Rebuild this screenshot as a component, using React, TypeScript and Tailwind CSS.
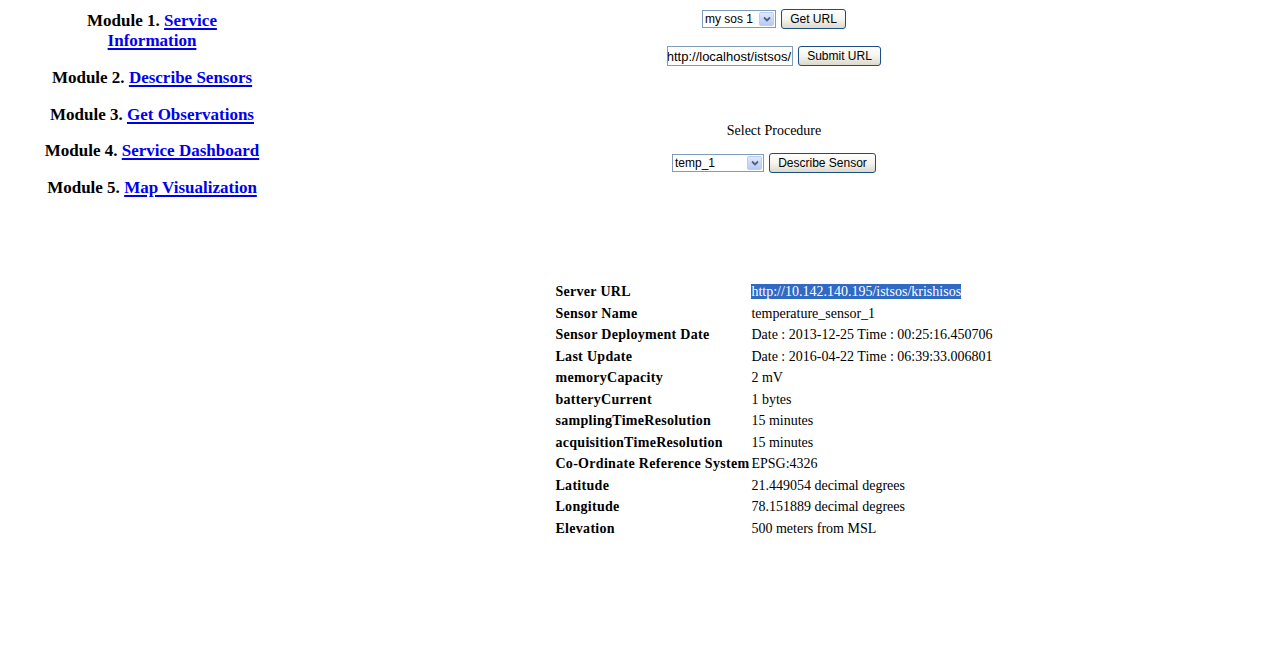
import React from 'react'

const modules = [
    { label: 'Module 1.', link: 'Service Information' },
    { label: 'Module 2.', link: 'Describe Sensors' },
    { label: 'Module 3.', link: 'Get Observations' },
    { label: 'Module 4.', link: 'Service Dashboard' },
    { label: 'Module 5.', link: 'Map Visualization' },
]

const rows: [string, string][] = [
    ['Server URL', 'http://10.142.140.195/istsos/krishisos'],
    ['Sensor Name', 'temperature_sensor_1'],
    ['Sensor Deployment Date', 'Date : 2013-12-25 Time : 00:25:16.450706'],
    ['Last Update', 'Date : 2016-04-22 Time : 06:39:33.006801'],
    ['memoryCapacity', '2 mV'],
    ['batteryCurrent', '1 bytes'],
    ['samplingTimeResolution', '15 minutes'],
    ['acquisitionTimeResolution', '15 minutes'],
    ['Co-Ordinate Reference System', 'EPSG:4326'],
    ['Latitude', '21.449054 decimal degrees'],
    ['Longitude', '78.151889 decimal degrees'],
    ['Elevation', '500 meters from MSL'],
]

// XP 风格的下拉框
const XpSelect = ({ value, width }: { value: string; width: string }) => (
    <div className={`${width} h-[18px] border border-[#7f9db9] bg-white flex items-center overflow-hidden`}>
        <span className="flex-1 pl-[2px] text-[12px] leading-none text-black whitespace-nowrap">{value}</span>
        <div className="w-[15px] h-[14px] mr-[1px] shrink-0 rounded-[2px] border border-[#b9cdf5] bg-gradient-to-b from-[#dfe8fd] to-[#b6c9f7] flex items-center justify-center">
            <svg width="8" height="6" viewBox="0 0 8 6">
                <path d="M1 1.5 L4 4.5 L7 1.5" fill="none" stroke="#4d6185" strokeWidth="1.8" />
            </svg>
        </div>
    </div>
)

const XpButton = ({ children, width }: { children: React.ReactNode; width: string }) => (
    <div className={`${width} h-[20px] rounded-[3px] border border-[#1c4d84] bg-gradient-to-b from-white via-[#f5f4ee] to-[#dcd9cc] flex items-center justify-center text-[12px] leading-none text-black whitespace-nowrap`}>
        {children}
    </div>
)

export default function App() {
    return (
        <div className="flex w-full min-h-[665px] bg-white text-black" style={{ fontFamily: '"Liberation Serif", serif' }}>
            {/* 左侧模块列表 */}
            <div className="w-[304px] pt-[11px]">
                <div className="w-[218px] ml-[43px] flex flex-col gap-[16.75px]">
                    {modules.map((m) => (
                        <p key={m.label} className="text-center text-[17px] leading-[20px] font-bold">
                            {m.label}{' '}
                            <a href="#" className="text-[#0000ee] underline decoration-2 underline-offset-2">{m.link}</a>
                        </p>
                    ))}
                </div>
            </div>

            {/* 右侧表单与传感器信息 */}
            <div className="flex-1 pr-[31px] flex flex-col items-center" style={{ fontFamily: '"Liberation Sans", Tahoma, sans-serif' }}>
                <div className="flex items-center gap-[5px] mt-[9px]">
                    <XpSelect value="my sos 1" width="w-[74px]" />
                    <XpButton width="w-[65px]">Get URL</XpButton>
                </div>

                <div className="flex items-center gap-[5px] mt-[17px]">
                    <div className="w-[126px] h-[20px] border border-[#7f9db9] bg-white overflow-hidden flex justify-end items-center pr-[1px]">
                        <span className="text-[13px] leading-none whitespace-nowrap">http://localhost/istsos/</span>
                    </div>
                    <XpButton width="w-[83px]">Submit URL</XpButton>
                </div>

                <div className="mt-[57px] text-[14px] leading-[16px]" style={{ fontFamily: '"Liberation Serif", serif' }}>
                    Select Procedure
                </div>

                <div className="flex items-center gap-[5px] mt-[14px]">
                    <XpSelect value="temp_1" width="w-[92px]" />
                    <XpButton width="w-[107px]">Describe Sensor</XpButton>
                </div>

                <table className="mt-[108px] text-[14px]" style={{ fontFamily: '"Liberation Serif", serif' }}>
                    <tbody>
                        {rows.map(([k, v], i) => (
                            <tr key={k} className="h-[21.5px]">
                                <td className="w-[196px] pr-[2px] font-bold tracking-[0.3px] whitespace-nowrap align-middle">{k}</td>
                                <td className="whitespace-nowrap align-middle">
                                    {i === 0 ? <span className="bg-[#316ac5] text-white">{v}</span> : v}
                                </td>
                            </tr>
                        ))}
                    </tbody>
                </table>
            </div>
        </div>
    )
}
